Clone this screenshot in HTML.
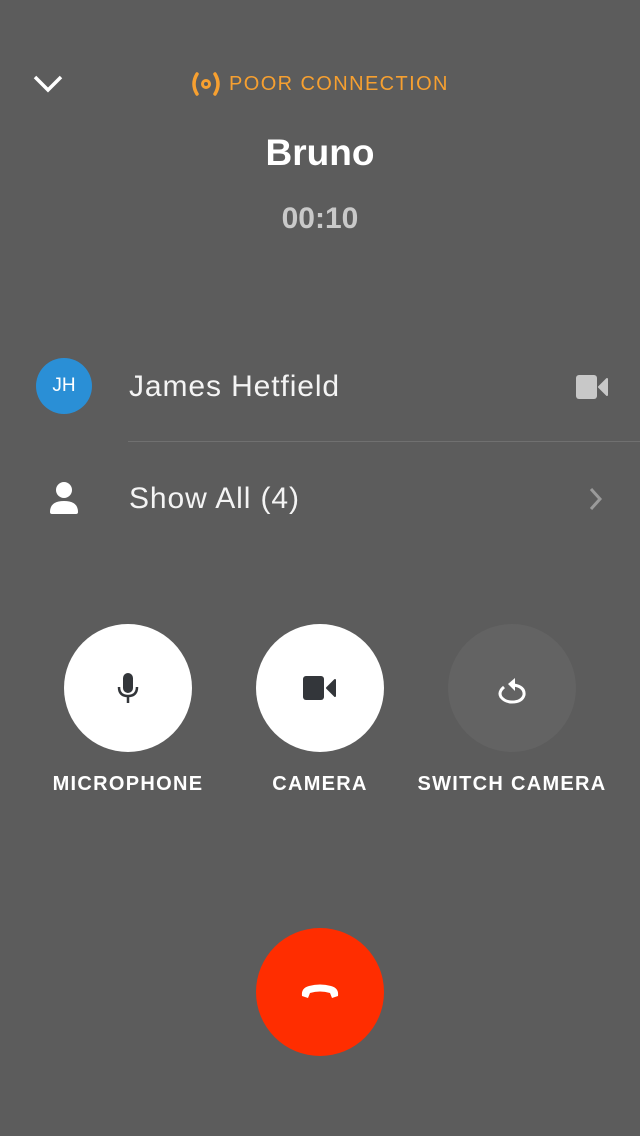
<!DOCTYPE html>
<html><head><style>
body{margin:0;width:640px;height:1136px;background:#5c5c5c;font-family:"Liberation Sans",sans-serif;position:relative;overflow:hidden;color:#fff}
.a{position:absolute}
.c{position:absolute;width:128px;height:128px;border-radius:50%;display:flex;align-items:center;justify-content:center}
.lbl{position:absolute;top:773px;font-size:20px;font-weight:bold;text-align:center;width:240px;letter-spacing:1.3px}
</style></head><body>
<svg class="a" style="left:32px;top:74px" width="32" height="20" viewBox="0 0 32 20"><path d="M3 3 L16 16 L29 3" fill="none" stroke="#fff" stroke-width="3.5"/></svg>
<svg class="a" style="left:189px;top:71px" width="34" height="26" viewBox="0 0 34 26"><path d="M8 3 Q2 13 8 23" fill="none" stroke="#f7a030" stroke-width="3.5" stroke-linecap="round"/><path d="M26 3 Q32 13 26 23" fill="none" stroke="#f7a030" stroke-width="3.5" stroke-linecap="round"/><circle cx="17" cy="13" r="3.5" fill="none" stroke="#f7a030" stroke-width="3"/></svg>
<div class="a" style="left:229px;top:73px;font-size:20px;color:#f7a030;letter-spacing:1.4px">POOR CONNECTION</div>
<div class="a" style="left:0;width:640px;text-align:center;top:132px;font-size:37px;font-weight:bold">Bruno</div>
<div class="a" style="left:0;width:640px;text-align:center;top:202px;font-size:30px;font-weight:bold;color:#c9c9c9">00:10</div>
<div class="a" style="left:36px;top:358px;width:56px;height:56px;border-radius:50%;background:#2a8fd6;font-size:19px;display:flex;align-items:center;justify-content:center">JH</div>
<div class="a" style="left:129px;top:370px;font-size:30px;font-weight:300;color:#f4f4f4;letter-spacing:0.9px">James Hetfield</div>
<svg class="a" style="left:576px;top:375px" width="32" height="24" viewBox="0 0 32 24"><rect x="0" y="0" width="21" height="24" rx="3" fill="#c8c8c8"/><path d="M23 12 L31 4 L31 20 Z" fill="#c8c8c8" stroke="#c8c8c8" stroke-width="2" stroke-linejoin="round"/></svg>
<div class="a" style="left:128px;top:441px;width:512px;height:1px;background:#707070"></div>
<svg class="a" style="left:48px;top:481px" width="32" height="34" viewBox="0 0 32 34"><circle cx="16" cy="9" r="8" fill="#fff"/><path d="M2 31 Q2 20 16 20 Q30 20 30 31 Q30 33 28 33 L4 33 Q2 33 2 31Z" fill="#fff"/></svg>
<div class="a" style="left:129px;top:482px;font-size:30px;font-weight:300;color:#f4f4f4;letter-spacing:0.9px">Show All (4)</div>
<svg class="a" style="left:588px;top:487px" width="16" height="24" viewBox="0 0 16 24"><path d="M3 2 L12 12 L3 22" fill="none" stroke="#9a9a9a" stroke-width="3"/></svg>
<div class="c" style="left:64px;top:624px;background:#fff"><svg width="24" height="32" viewBox="0 0 24 32"><rect x="7" y="1" width="10" height="20" rx="5" fill="#33363a"/><path d="M3 15 Q3 24 12 24 Q21 24 21 15" fill="none" stroke="#33363a" stroke-width="2.5"/><path d="M12 24 V31" stroke="#33363a" stroke-width="2.5"/></svg></div>
<div class="c" style="left:256px;top:624px;background:#fff"><svg width="34" height="26" viewBox="0 0 34 26"><rect x="0" y="1" width="21" height="24" rx="3" fill="#33363a"/><path d="M24 13 L32 5 L32 21 Z" fill="#33363a" stroke="#33363a" stroke-width="2" stroke-linejoin="round"/></svg></div>
<div class="c" style="left:448px;top:624px;background:#636363"><svg width="36" height="36" viewBox="0 0 36 36"><path d="M10 17 Q4 22 7 27 Q11 32 18 32 Q28 32 30 25 Q31 17 20 15" fill="none" stroke="#fff" stroke-width="3"/><path d="M21 8 L14 14 L21 21 Z" fill="#fff"/></svg></div>
<div class="lbl" style="left:8px">MICROPHONE</div>
<div class="lbl" style="left:200px">CAMERA</div>
<div class="lbl" style="left:392px">SWITCH CAMERA</div>
<div class="c" style="left:256px;top:928px;background:#ff2d00"><svg width="42" height="20" viewBox="0 0 42 20"><path d="M3 14 Q2 6 10 4 Q21 1 32 4 Q40 6 39 14 L33 16 L31 11 Q21 8 11 11 L9 16 Z" fill="#fff"/></svg></div>
</body></html>
